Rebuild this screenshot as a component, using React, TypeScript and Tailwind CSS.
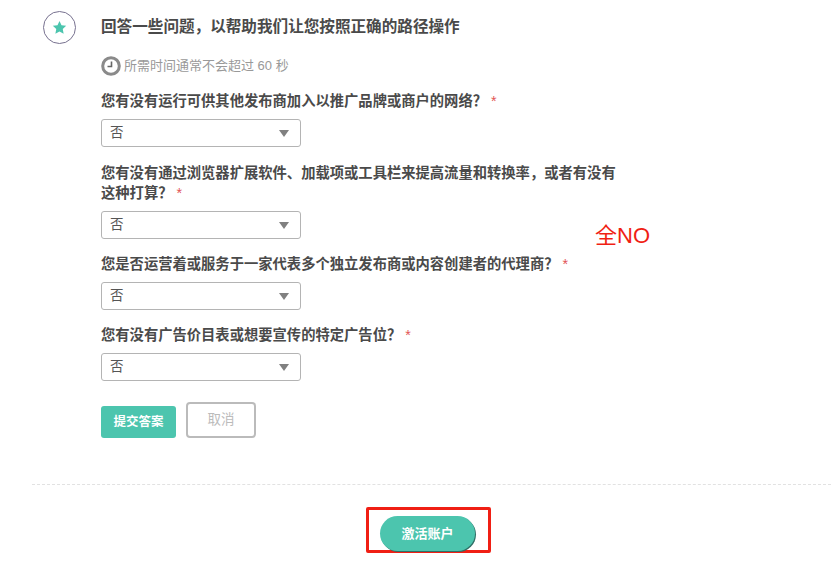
const fontStack = "font-['Liberation_Sans','Noto_Sans_CJK_SC',sans-serif]";

type Question = {
  lines: string[];
  top: string;
};

const questions: Question[] = [
  { lines: ['您有没有运行可供其他发布商加入以推广品牌或商户的网络？'], top: 'mt-[15px]' },
  { lines: ['您有没有通过浏览器扩展软件、加载项或工具栏来提高流量和转换率，或者有没有', '这种打算？'], top: 'mt-[16px]' },
  { lines: ['您是否运营着或服务于一家代表多个独立发布商或内容创建者的代理商？'], top: 'mt-[15px]' },
  { lines: ['您有没有广告价目表或想要宣传的特定广告位？'], top: 'mt-[15px]' },
];

function Question({ lines, top }: Question) {
  return (
    <div className={top}>
      <div className="w-[530px] text-[14.3px] font-bold leading-[20px] text-[#4a4a4a]">
        {lines.map((line, index) => (
          <div key={line}>
            {line}
            {index === lines.length - 1 && <span className="ml-[4px] font-normal text-[#e25555]">*</span>}
          </div>
        ))}
      </div>
      <div className="mt-[8px] flex h-[28px] w-[200px] items-center justify-between rounded-[3px] border border-[#b4b4b4] bg-white pl-[8px] pr-[11px] text-[13.5px] text-[#555]">
        <span>否</span>
        <span className="h-0 w-0 border-x-[5px] border-t-[7px] border-x-transparent border-t-[#808080]" />
      </div>
    </div>
  );
}

export default function App() {
  return (
    <div className={`h-[561px] w-[831px] overflow-hidden bg-white ${fontStack}`}>
      <div className="flex pl-[43px] pt-[11px]">
        <div className="flex h-[33px] w-[33px] shrink-0 items-center justify-center rounded-full border border-[#77718f]">
          <svg width="15" height="15" viewBox="0 0 24 24" fill="#4cc5ae">
            <path d="M12 1.5l3.2 6.9 7.5.9-5.5 5.2 1.4 7.5L12 18.3l-6.6 3.7 1.4-7.5-5.5-5.2 7.5-.9z" />
          </svg>
        </div>
        <div className="ml-[25px]">
          <h1 className="pt-[4px] text-[15.6px] font-bold leading-[24px] text-[#4a4a4a]">
            回答一些问题，以帮助我们让您按照正确的路径操作
          </h1>
          <div className="mt-[16px] flex h-[21px] items-center text-[13px] text-[#999]">
            <svg width="20" height="20" viewBox="0 0 20 20" fill="none" stroke="#8a8a8a">
              <circle cx="10" cy="10" r="8.3" strokeWidth="3" />
              <path d="M10.5 5.5v5H6.5" strokeWidth="1.6" stroke="#666" />
            </svg>
            <span className="ml-[3px]">所需时间通常不会超过 60 秒</span>
          </div>
          {questions.map((question) => (
            <Question key={question.lines[0]} {...question} />
          ))}
          <div className="mt-[21px] flex items-end gap-[10px]">
            <button className="h-[32px] w-[75px] rounded-[3px] bg-[#4cc5ae] text-[12.5px] font-bold text-white">提交答案</button>
            <button className="h-[36px] w-[70px] rounded-[4px] border-2 border-[#bbb] bg-white text-[13.5px] text-[#bbb]">取消</button>
          </div>
        </div>
      </div>
      <div className="ml-[32px] mt-[46px] border-t border-dashed border-[#e2e2e2]" />
      <div className="mt-[22px] flex justify-center pl-[26px]">
        <div className="h-[46px] w-[125px] rounded-[2px] border-[3px] border-[#f01f14] pl-[11px] pt-[6px]">
          <button className="h-[35px] w-[95px] rounded-full bg-[#4cc5ae] text-[13px] font-bold text-white shadow-[1px_1px_0_#2f6f66]">激活账户</button>
        </div>
      </div>
      <div className="absolute left-[595px] top-[222px] text-[22px] leading-[28px] text-[#f01f14]">全NO</div>
    </div>
  );
}
